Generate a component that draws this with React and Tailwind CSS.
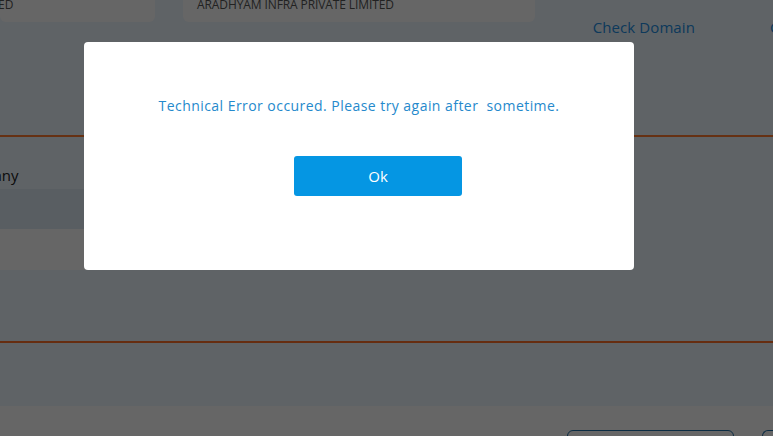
import React from 'react';

const font = { fontFamily: '"Open Sans", "Noto Sans", sans-serif' };

function Page() {
  return (
    <div className="w-[773px] h-[436px] overflow-hidden bg-[#eef7ff] flex flex-col">
      <div className="flex gap-[28px] -mt-[20px] h-[42px] shrink-0">
        <div className="w-[155px] h-[42px] bg-white rounded-md overflow-hidden flex items-end pb-[11px]">
          <span className="text-[12px] text-[#555] leading-none -ml-[2px]">ED</span>
        </div>
        <div className="w-[352px] h-[42px] bg-white rounded-md flex items-end pb-[11px] pl-[14px]">
          <span className="text-[12px] text-[#555] leading-none tracking-[-0.1px]">ARADHYAM INFRA PRIVATE LIMITED</span>
        </div>
      </div>
      <div className="flex justify-end h-[113px] shrink-0 overflow-hidden">
        <div className="flex gap-[75px] -mt-[6px] whitespace-nowrap">
          <span className="text-[15px] text-[#2390e4] leading-[22px] tracking-[0.1px]">Check Domain</span>
          <span className="text-[15px] text-[#2390e4] leading-[22px] w-[3px] overflow-hidden">C</span>
        </div>
      </div>
      <div className="h-[2px] bg-[#ff7a30] shrink-0" />
      <div className="h-[52px] flex items-end pb-[3px] shrink-0">
        <span className="text-[15px] text-[#222] -ml-[48px]">Company</span>
      </div>
      <div className="w-[420px] h-[40px] bg-[#dfecf6] shrink-0" />
      <div className="w-[420px] h-[41px] bg-white shrink-0" />
      <div className="h-[71px] shrink-0" />
      <div className="h-[2px] bg-[#ff7028] shrink-0" />
      <div className="h-[63px] shrink-0" />
      <div className="flex-1 bg-white flex justify-end items-start pt-[24px] gap-[28px]">
        <div className="w-[167px] h-[30px] border border-[#1f6fa8] rounded-md" />
        <div className="w-[11px] h-[30px] border-l border-t border-[#1f6fa8] rounded-tl-md" />
      </div>
    </div>
  );
}

export default function App() {
  return (
    <div className="relative w-[773px] h-[436px] overflow-hidden" style={font}>
      <Page />
      <div className="absolute inset-0 bg-black/60 flex items-start justify-start pt-[42px] pl-[84px]">
        <div className="w-[550px] h-[228px] bg-white rounded-[4px] flex flex-col items-center">
          <p className="mt-[54px] text-[14px] leading-[20px] text-[#2589cc] tracking-[0.45px] whitespace-pre">
            Technical Error occured. Please try again after  sometime.
          </p>
          <button className="self-start ml-[210px] mt-[40px] w-[168px] h-[40px] bg-[#0596e3] rounded-[3px] text-white text-[15px] font-medium">
            Ok
          </button>
        </div>
      </div>
    </div>
  );
}
